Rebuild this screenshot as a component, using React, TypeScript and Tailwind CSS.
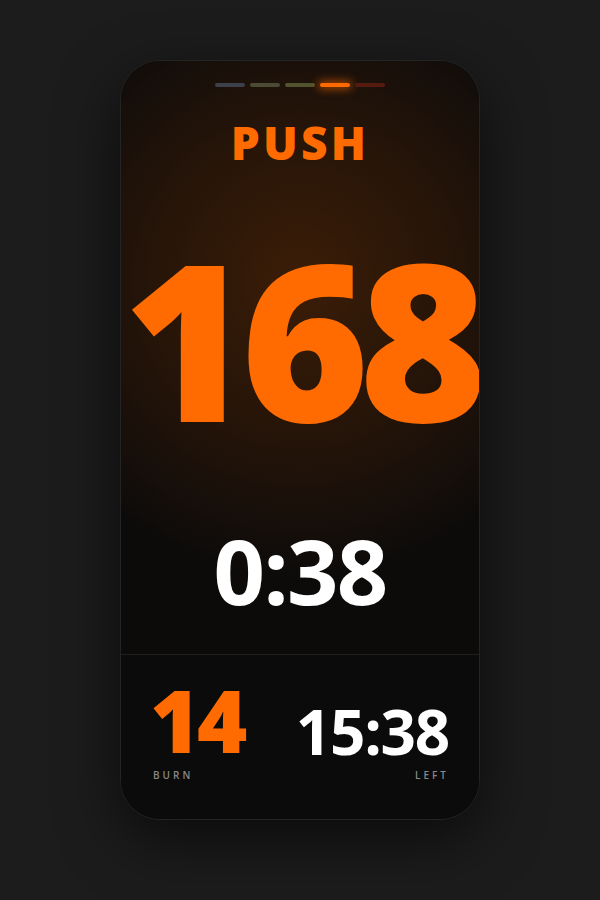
import React from "react";

const bars = [
  "bg-[#3b404b]",
  "bg-[#4a4a35]",
  "bg-[#52532f]",
  "bg-[#ff6a00] shadow-[0_0_8px_2px_rgba(255,106,0,0.6)]",
  "bg-[#571a10]",
];

export default function App() {
  return (
    <div className="flex h-[900px] w-[600px] justify-center bg-[#1c1c1c] pt-[60px] font-['Open_Sans',sans-serif]">
      <div className="flex h-[760px] w-[360px] flex-col overflow-hidden rounded-[40px] border border-[#242424] bg-[#0b0b0b] shadow-[0_20px_60px_rgba(0,0,0,0.6)]">
        <div className="flex flex-1 flex-col items-center bg-[radial-gradient(circle_at_50%_37%,#3b1d07_0%,#2a1608_30%,#170f0a_58%,#0c0b0a_72%)]">
          <div className="mt-[22px] flex gap-[5px]">
            {bars.map((c, i) => (
              <div key={i} className={`h-[4px] w-[30px] rounded-full ${c}`} />
            ))}
          </div>
          <div className="mt-[32px] text-[46px] font-extrabold leading-none tracking-[0.07em] text-[#ff6b00]">
            PUSH
          </div>
          <div className="mt-[63px] w-full whitespace-nowrap text-center text-[219px] font-extrabold leading-none tracking-[-0.047em] text-[#ff6b00]">
            168
          </div>
          <div className="mt-[78px] text-[90px] font-bold leading-none tracking-[-0.02em] text-white">
            0:38
          </div>
        </div>
        <div className="flex h-[165px] items-start justify-between border-t border-[#1f1f1f] bg-[#0b0b0b] pl-[32px] pr-[30px] pt-[25px]">
          <div className="flex flex-col">
            <div className="-ml-[3px] text-[86px] font-extrabold leading-[80px] tracking-[-0.04em] text-[#ff6b00]">14</div>
            <div className="mt-[10px] text-[10px] font-semibold leading-none tracking-[0.3em] text-[#888]">BURN</div>
          </div>
          <div className="flex flex-col items-end">
            <div className="mt-[22px] text-[62px] font-bold leading-[58px] tracking-[-0.02em] text-white">15:38</div>
            <div className="mt-[10px] text-[10px] font-semibold leading-none tracking-[0.3em] text-[#888]">LEFT</div>
          </div>
        </div>
      </div>
    </div>
  );
}
